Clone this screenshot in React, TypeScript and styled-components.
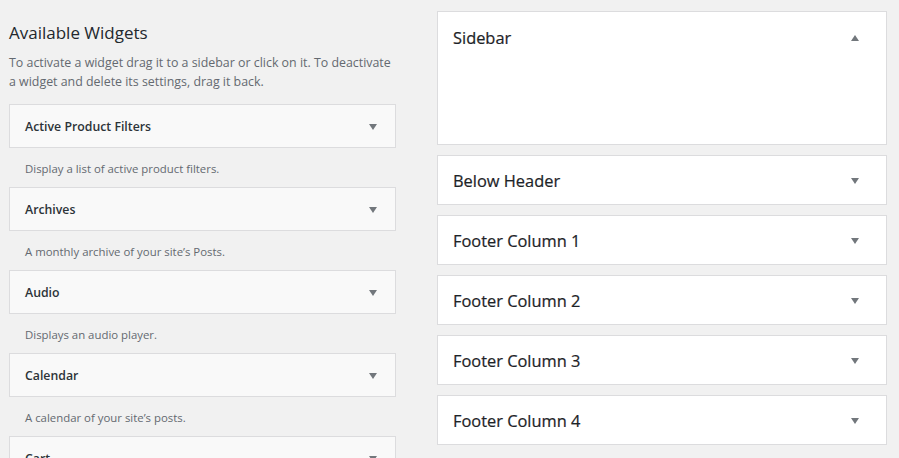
import styled, { createGlobalStyle } from 'styled-components'

const GlobalStyle = createGlobalStyle`
  html, body {
    margin: 0;
    padding: 0;
    background: #f1f1f1;
    font-family: 'Open Sans', 'Noto Sans', sans-serif;
    color: #23282d;
  }
`

const availableWidgets = [
  { name: 'Active Product Filters', desc: 'Display a list of active product filters.' },
  { name: 'Archives', desc: 'A monthly archive of your site’s Posts.' },
  { name: 'Audio', desc: 'Displays an audio player.' },
  { name: 'Calendar', desc: 'A calendar of your site’s posts.' },
  { name: 'Cart', desc: 'Display the customer shopping cart.' },
]

const areas = ['Below Header', 'Footer Column 1', 'Footer Column 2', 'Footer Column 3', 'Footer Column 4']

export default function App() {
  return (
    <>
      <GlobalStyle />
      <Page>
        <LeftColumn>
          <Heading>Available Widgets</Heading>
          <Intro>
            To activate a widget drag it to a sidebar or click on it. To deactivate a widget and
            delete its settings, drag it back.
          </Intro>
          {availableWidgets.map((w) => (
            <div key={w.name}>
              <WidgetBox>
                <WidgetTitle>{w.name}</WidgetTitle>
                <Arrow />
              </WidgetBox>
              <WidgetDesc>{w.desc}</WidgetDesc>
            </div>
          ))}
        </LeftColumn>

        <RightColumn>
          <AreaBox $open>
            <AreaHeader $open>
              <AreaTitle>Sidebar</AreaTitle>
              <Arrow $up />
            </AreaHeader>
          </AreaBox>
          {areas.map((a) => (
            <AreaBox key={a}>
              <AreaHeader>
                <AreaTitle>{a}</AreaTitle>
                <Arrow />
              </AreaHeader>
            </AreaBox>
          ))}
        </RightColumn>
      </Page>
    </>
  )
}

const Page = styled.div`
  display: flex;
  align-items: flex-start;
  gap: 41px;
  padding: 0 12px 0 9px;
  height: 458px;
  overflow: hidden;
`

const LeftColumn = styled.div`
  width: 387px;
  flex-shrink: 0;
  padding-top: 21px;
`

const Heading = styled.h2`
  margin: 0 0 8px;
  font-size: 17px;
  line-height: 24px;
  font-weight: 400;
  color: #23282d;
`

const Intro = styled.p`
  margin: 0 0 13px;
  font-size: 12.4px;
  line-height: 19px;
  color: #646970;
`

const WidgetBox = styled.div`
  box-sizing: border-box;
  height: 44px;
  display: flex;
  align-items: center;
  justify-content: space-between;
  padding: 1px 18px 0 15px;
  background: #f9f9f9;
  border: 1px solid #dcdcde;
`

const WidgetTitle = styled.span`
  font-size: 12.3px;
  font-weight: 600;
  color: #2c3338;
`

const WidgetDesc = styled.p`
  margin: 0;
  padding: 11px 0 9px 16px;
  font-size: 11.4px;
  line-height: 19px;
  color: #646970;
`

const RightColumn = styled.div`
  flex: 1;
  padding-top: 11px;
  display: flex;
  flex-direction: column;
  gap: 10px;
`

const AreaBox = styled.div<{ $open?: boolean }>`
  box-sizing: border-box;
  height: ${({ $open }) => ($open ? '134px' : '50px')};
  background: #fff;
  border: 1px solid #dcdcde;
`

const AreaHeader = styled.div<{ $open?: boolean }>`
  height: ${({ $open }) => ($open ? '51px' : '49px')};
  display: flex;
  align-items: center;
  justify-content: space-between;
  padding: 0 27px 0 15px;
`

const AreaTitle = styled.h3`
  margin: 0;
  font-size: 16.4px;
  font-weight: 400;
  color: #1d2327;
  -webkit-text-stroke: 0.2px #1d2327;
`

const Arrow = styled.span<{ $up?: boolean }>`
  width: 0;
  height: 0;
  border-left: 4.5px solid transparent;
  border-right: 4.5px solid transparent;
  ${({ $up }) => ($up ? 'border-bottom: 6px solid #72777c;' : 'border-top: 6px solid #72777c;')}
`
